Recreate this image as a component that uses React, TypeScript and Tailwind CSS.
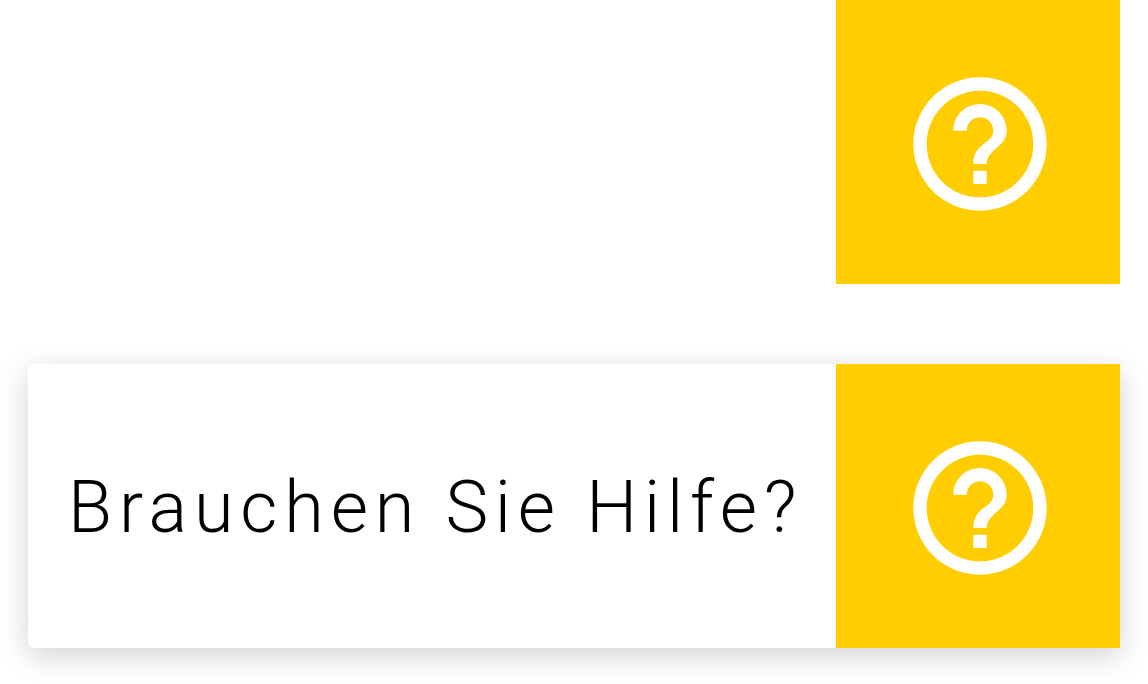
function HelpIcon() {
  return (
    <svg viewBox="0 0 24 24" className="w-40 h-40 fill-white">
      <path d="M11 18h2v-2h-2v2zm1-16C6.48 2 2 6.48 2 12s4.48 10 10 10 10-4.48 10-10S17.52 2 12 2zm0 18c-4.41 0-8-3.59-8-8s3.59-8 8-8 8 3.59 8 8-3.59 8-8 8zm0-14c-2.21 0-4 1.79-4 4h2c0-1.1.9-2 2-2s2 .9 2 2c0 2-3 1.75-3 5h2c0-2.25 3-2.5 3-5 0-2.21-1.79-4-4-4z" />
    </svg>
  )
}

function HelpTile() {
  return (
    <div className="w-[284px] h-[284px] shrink-0 bg-[#ffcd00] flex items-center justify-center pl-1 pt-1">
      <HelpIcon />
    </div>
  )
}

export default function App() {
  return (
    <div className="w-[1148px] h-[684px] overflow-hidden bg-white px-[28px] flex flex-col gap-20">
      <div className="flex justify-end">
        <HelpTile />
      </div>
      <div className="flex items-center justify-between bg-white rounded-l-md overflow-hidden shadow-[0_8px_30px_rgba(0,0,0,0.18)]">
        <span className="pl-[40px] pt-1 text-[72px] font-light text-black tracking-[6.8px] whitespace-nowrap [font-family:'Roboto',sans-serif]">
          Brauchen Sie Hilfe?
        </span>
        <HelpTile />
      </div>
    </div>
  )
}
